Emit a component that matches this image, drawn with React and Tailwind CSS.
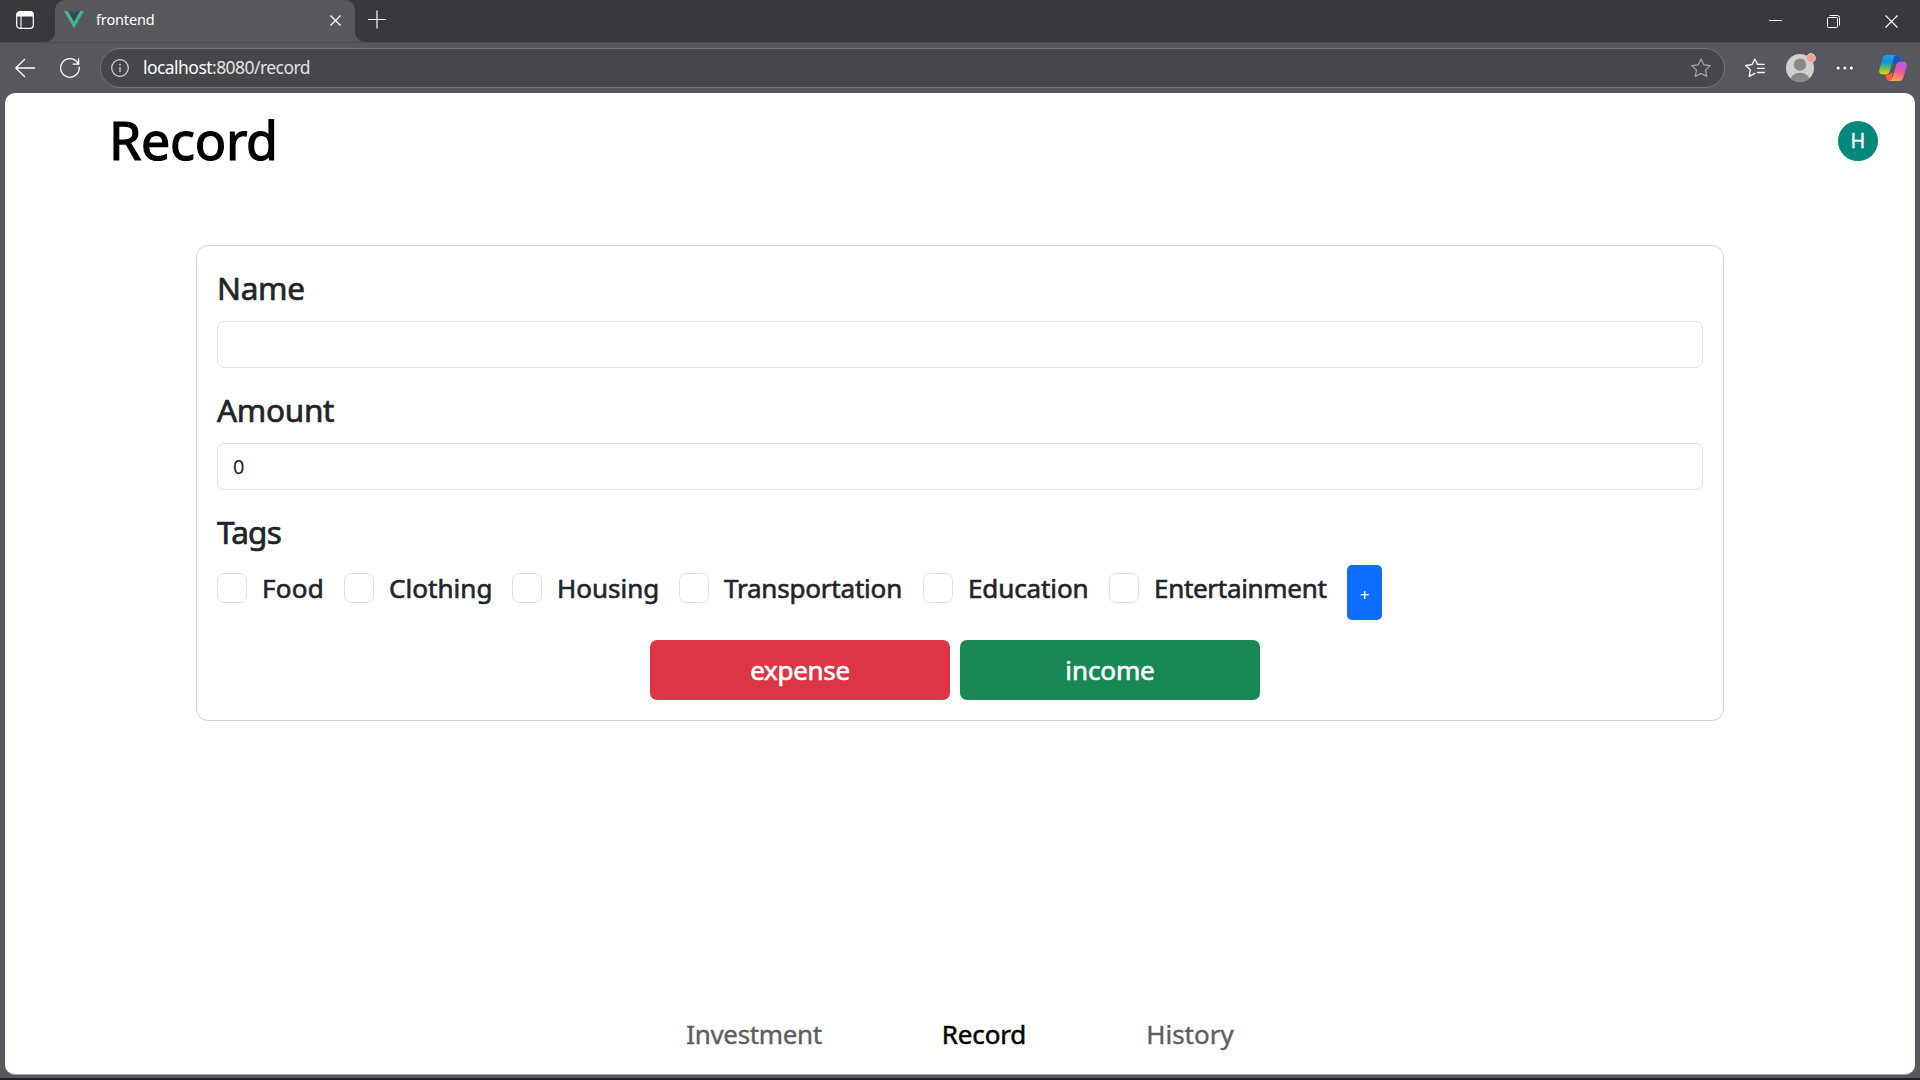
function TabActionsIcon() {
  return (
    <svg width="18" height="18" viewBox="0 0 18 18" fill="none" stroke="#fff">
      <rect x="0.7" y="0.7" width="16.6" height="16.6" rx="3" strokeWidth="1.2" />
      <path d="M1 5V3.6C1 2 2 1 3.6 1h10.8C16 1 17 2 17 3.6V5z" fill="#fff" strokeWidth="1" />
      <path d="M5 5v12.5" strokeWidth="1.1" />
    </svg>
  );
}

function VueLogo() {
  return (
    <svg width="20" height="18" viewBox="0 0 20 18">
      <path d="M0 0h4l6 10.4L16 0h4L10 17.3z" fill="#41b883" />
      <path d="M4 0h3.7L10 4l2.3-4H16l-6 10.4z" fill="#35495e" />
    </svg>
  );
}

function Cross({ size, width }) {
  return (
    <svg width={size} height={size} viewBox="0 0 12 12" stroke="#fff" strokeWidth={width} fill="none">
      <path d="M.5.5l11 11M11.5.5l-11 11" />
    </svg>
  );
}

function BackIcon() {
  return (
    <svg width="20" height="20" viewBox="0 0 20 20" fill="none" stroke="#fff" strokeWidth="1.3" strokeLinecap="round" strokeLinejoin="round">
      <path d="M19.5 10H.8M9.5 1.5L.8 10l8.7 8.5" />
    </svg>
  );
}

function RefreshIcon() {
  return (
    <svg width="20" height="20" viewBox="0 0 20 20" fill="none" stroke="#fff" strokeWidth="1.3" strokeLinecap="round" strokeLinejoin="round">
      <path d="M19.2 9.2A9.3 9.3 0 1 1 17.6 4.7L18.6 6" />
      <path d="M18.6.8v5.4h-5.4" />
    </svg>
  );
}

function InfoIcon() {
  return (
    <svg width="18" height="18" viewBox="0 0 18 18" fill="none" stroke="#d4d5d7" strokeWidth="1.25">
      <circle cx="9" cy="9" r="8.3" />
      <path d="M9 8v5" />
      <circle cx="9" cy="5.6" r="0.9" fill="#d4d5d7" stroke="none" />
    </svg>
  );
}

function StarIcon() {
  return (
    <svg width="20" height="20" viewBox="0 0 20 20" fill="none" stroke="#a2a3a7" strokeWidth="1.3" strokeLinejoin="round">
      <path d="M10 1l2.75 5.8 6.45.85-4.7 4.45 1.2 6.4L10 15.4l-5.7 3.1 1.2-6.4L.8 7.65l6.45-.85z" />
    </svg>
  );
}

function FavoritesIcon() {
  return (
    <svg width="20" height="20" viewBox="0 0 20 20" fill="none" stroke="#fff" strokeWidth="1.3" strokeLinejoin="round" strokeLinecap="round">
      <path d="M12.5 6.3L9.8 1 7 6.6 .8 7.5l4.5 4.4L4.2 18.4l5.6-3" />
      <path d="M12.5 6.3h6.8M12.5 10.4h6.8M12.5 14.5h6.8" />
    </svg>
  );
}

function ProfileIcon() {
  return (
    <svg className="overflow-visible" width="28" height="28" viewBox="0 0 28 28">
      <clipPath id="profile">
        <circle cx="14" cy="14" r="14" />
      </clipPath>
      <g clipPath="url(#profile)">
        <rect width="28" height="28" fill="#d2d0ce" />
        <circle cx="14" cy="10.6" r="6.2" fill="#8a8886" />
        <ellipse cx="14" cy="27" rx="10" ry="8.2" fill="#8a8886" />
      </g>
      <circle cx="25" cy="4" r="4.4" fill="#fa9a95" stroke="#d2d0ce" strokeWidth="1" />
    </svg>
  );
}

function MoreIcon() {
  return (
    <svg width="18" height="6" viewBox="0 0 18 6" fill="#fff">
      <circle cx="2.2" cy="3" r="1.6" />
      <circle cx="8.8" cy="3" r="1.6" />
      <circle cx="15.4" cy="3" r="1.6" />
    </svg>
  );
}

function CopilotIcon() {
  return (
    <svg width="28" height="26" viewBox="0 0 28 26">
      <defs>
        <linearGradient id="cpA" x1="0.3" y1="0" x2="0.3" y2="1">
          <stop offset="0" stopColor="#17a5f5" />
          <stop offset="0.35" stopColor="#1590dc" />
          <stop offset="0.65" stopColor="#4fb878" />
          <stop offset="1" stopColor="#f5d400" />
        </linearGradient>
        <linearGradient id="cpB" x1="0.7" y1="0" x2="0.4" y2="1">
          <stop offset="0" stopColor="#a860f0" />
          <stop offset="0.5" stopColor="#f0569a" />
          <stop offset="1" stopColor="#ffa34c" />
        </linearGradient>
      </defs>
      <path d="M14.5 0h3.3c1.6 0 2.5 1 3 2.6l1.3 4.2h-3.6c-2 0-3 1-3.6 2.8z" fill="#1c4fd0" />
      <path d="M13.5 26h-3.2c-1.6 0-2.5-1-3-2.6L6 19.2h3.5c2 0 3-1 3.7-2.8z" fill="#f2603c" />
      <path d="M7.6 0h9.9c-1.5.3-2.3 1.5-2.8 3l-3.8 12.7c-.7 2.2-1.9 3.5-4.2 3.5H3.2C.9 19.2-.3 17 .3 14.8L3.6 3.5C4.3 1.3 5.4 0 7.6 0z" fill="url(#cpA)" />
      <path d="M20.4 26h-9.900c1.500-.3 2.300-1.500 2.800-3l3.800-12.700c.7-2.200 1.900-3.500 4.200-3.500h3.500c2.300 0 3.500 2.200 2.900 4.400l-3.300 11.300c-.7 2.200-1.800 3.500-4 3.500z" fill="url(#cpB)" />
    </svg>
  );
}

function TabStrip() {
  return (
    <div className="flex h-[42px]">
      <div className="h-[42px] w-[55px] rounded-br-[10px] bg-[#38393c] pt-[11px] pl-4">
        <TabActionsIcon />
      </div>
      <div className="w-[300px] bg-[linear-gradient(#38393c_50%,#57585d_50%)]">
        <div className="flex h-full items-start rounded-t-[10px] bg-[#57585d] pl-[9px]">
          <div className="mt-[11px]"><VueLogo /></div>
          <span className="mt-[9px] ml-3 w-[234px] text-[14.5px] leading-[21px] tracking-[-0.15px] text-white">frontend</span>
          <div className="mt-[15px]"><Cross size={11} width={1.4} /></div>
        </div>
      </div>
      <div className="flex flex-1 items-start rounded-bl-[10px] bg-[#38393c]">
        <svg className="mt-[10px] ml-[13px]" width="18" height="19" viewBox="0 0 18 19" stroke="#fff" strokeWidth="1.2">
          <path d="M0 9.500h18M9 .500v18" />
        </svg>
        <div className="ml-auto flex items-start pr-[22px]">
          <div className="mt-5 h-px w-[13px] bg-white" />
          <svg className="mt-[15px] ml-[45px]" width="13" height="13" viewBox="0 0 13 13" fill="none" stroke="#fff" strokeWidth="1">
            <rect x="0.5" y="2.500" width="10" height="10" rx="1" />
            <path d="M2.5.5H10.500a2 2 0 0 1 2 2V10.500" />
          </svg>
          <div className="mt-[15px] ml-[45px]"><Cross size={13} width={1.1} /></div>
        </div>
      </div>
    </div>
  );
}

function Toolbar() {
  return (
    <div className="flex h-[51px] items-center border-t border-[#4b4c50] pr-[13px] pl-[15px]">
      <BackIcon />
      <div className="ml-[25px]"><RefreshIcon /></div>
      <div className="ml-5 flex h-10 flex-1 items-center rounded-full border border-[#76777b] bg-[#46474b] pr-[13px] pl-[10px]">
        <InfoIcon />
        <span className="mb-[2px] ml-[14px] flex-1 text-[17.5px] leading-6 tracking-[-0.55px] text-[#e2e2e3]">
          <span className="text-white">localhost</span>:8080/record
        </span>
        <StarIcon />
      </div>
      <div className="ml-5"><FavoritesIcon /></div>
      <div className="ml-[21px]"><ProfileIcon /></div>
      <div className="ml-[22px]"><MoreIcon /></div>
      <div className="ml-[25px]"><CopilotIcon /></div>
    </div>
  );
}

const tags = [
  { label: "Food", item: "w-[127px]", text: "tracking-[0.3px]" },
  { label: "Clothing", item: "w-[168px]", text: "tracking-[0.05px]" },
  { label: "Housing", item: "w-[167px]", text: "tracking-normal" },
  { label: "Transportation", item: "w-[244px]", text: "tracking-[-0.2px]" },
  { label: "Education", item: "w-[186px]", text: "tracking-[-0.1px]" },
  { label: "Entertainment", item: "w-[238px]", text: "tracking-[-0.3px]" },
];

function Heading({ spacing, children }) {
  return (
    <h2 className={`mb-[14px] text-[31.5px] leading-[39px] [-webkit-text-stroke:0.7px] ${spacing}`}>{children}</h2>
  );
}

function Field({ label, value }) {
  return (
    <div className="mb-[22px]">
      <Heading spacing="tracking-[-0.3px]">{label}</Heading>
      <div className="h-[47px] rounded-[7px] border border-[#dee2e6] px-[15px] text-[20px] leading-[45px]">{value}</div>
    </div>
  );
}

function RecordForm() {
  return (
    <section className="mx-auto mt-14 h-[476px] w-[1528px] rounded-[12px] border border-[#d2d2d2] px-5 pt-[22px] text-[#212529]">
      <Field label="Name" value="" />
      <Field label="Amount" value="0" />
      <Heading spacing="tracking-[-0.8px]">Tags</Heading>
      <div className="flex items-start">
        {tags.map((tag) => (
          <label key={tag.label} className={`flex items-start ${tag.item}`}>
            <span className="mt-2 mr-[15px] size-[30px] shrink-0 rounded-[7px] border border-[#dee2e6]" />
            <span className={`mt-[3px] text-[26px] leading-10 [-webkit-text-stroke:0.6px] ${tag.text}`}>{tag.label}</span>
          </label>
        ))}
        <button className="flex h-[55px] w-[35px] items-center justify-center rounded-[5px] bg-[#0d6efd] pt-[4px] text-[17px] text-white">+</button>
      </div>
      <div className="mt-5 mr-[10px] flex justify-center gap-[10px] text-[26px] leading-[60px] text-white [-webkit-text-stroke:0.6px]">
        <button className="h-[60px] w-[300px] rounded-[7px] bg-[#dc3545] tracking-[-0.3px]">expense</button>
        <button className="h-[60px] w-[300px] rounded-[7px] bg-[#198754] tracking-[-0.1px]">income</button>
      </div>
    </section>
  );
}

export default function App() {
  return (
    <div className="flex h-[1080px] w-[1920px] flex-col overflow-hidden bg-[#57585d] font-['Noto_Sans',sans-serif]">
      <TabStrip />
      <Toolbar />
      <main className="mx-[5px] flex h-[982px] flex-col rounded-[10px] border-b border-[#a5a6a8] bg-white">
        <header className="flex h-24 items-center justify-between pr-[37px] pl-[104px]">
          <h1 className="-mt-[2px] text-[52px] leading-[60px] tracking-[-0.3px] text-black [-webkit-text-stroke:1.2px]">Record</h1>
          <div className="flex size-10 items-center justify-center rounded-full bg-[#00897b] font-[Roboto,sans-serif] text-[20px] leading-10 text-white [-webkit-text-stroke:0.3px]">H</div>
        </header>
        <RecordForm />
        <nav className="mt-auto mb-5 flex justify-center gap-[120px] text-[26px] leading-10 text-[#5e5e5e] [-webkit-text-stroke:0.4px]">
          <a className="tracking-[-0.35px]">Investment</a>
          <a className="tracking-[-0.15px] text-black [-webkit-text-stroke:0.5px]">Record</a>
          <a>History</a>
        </nav>
      </main>
      <div className="mt-auto h-[2px] bg-[#202126]" />
    </div>
  );
}
